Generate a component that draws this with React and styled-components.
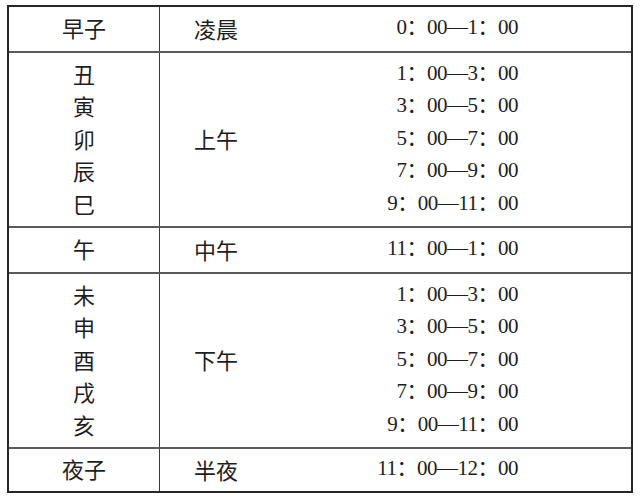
import React from "react";
import styled, { createGlobalStyle } from "styled-components";

const GlobalStyle = createGlobalStyle`
  html, body {
    margin: 0;
    padding: 0;
    background: #ffffff;
  }
`;

const Page = styled.div`
  width: 640px;
  height: 500px;
  padding: 5px 0 0 7px;
  box-sizing: border-box;
  background: #ffffff;
`;

const Frame = styled.div`
  width: 626px;
  border: 2px solid #262626;
  box-sizing: border-box;
  color: #1e1e1e;
`;

const Row = styled.div`
  display: grid;
  grid-template-columns: 151px 1fr;
  height: ${({ $h }) => $h}px;
  border-top: ${({ $first }) => ($first ? "none" : "2px solid #5a5a5a")};
`;

const Branch = styled.div`
  border-right: 1px solid #3a3a3a;
  display: flex;
  flex-direction: column;
  align-items: center;
  justify-content: center;
  padding-bottom: 3px;
  font-family: "Noto Sans CJK SC", sans-serif;
  font-size: 22px;
  line-height: 32.5px;
`;

const Period = styled.div`
  display: flex;
  align-items: center;
  padding: 0 113px 3px 34px;
`;

const Label = styled.span`
  font-family: "Noto Sans CJK SC", sans-serif;
  font-size: 22px;
`;

const Times = styled.div`
  margin-left: auto;
  display: flex;
  flex-direction: column;
  align-items: flex-end;
  font-family: "Liberation Serif", "Noto Sans CJK SC", serif;
  font-size: 21px;
  letter-spacing: -0.5px;
  line-height: 32.5px;
`;

const groups = [
  { h: 44, names: ["早子"], label: "凌晨", times: ["0：00—1：00"] },
  {
    h: 173,
    names: ["丑", "寅", "卯", "辰", "巳"],
    label: "上午",
    times: ["1：00—3：00", "3：00—5：00", "5：00—7：00", "7：00—9：00", "9：00—11：00"],
  },
  { h: 44, names: ["午"], label: "中午", times: ["11：00—1：00"] },
  {
    h: 173,
    names: ["未", "申", "酉", "戌", "亥"],
    label: "下午",
    times: ["1：00—3：00", "3：00—5：00", "5：00—7：00", "7：00—9：00", "9：00—11：00"],
  },
  { h: 42, names: ["夜子"], label: "半夜", times: ["11：00—12：00"] },
];

export default function App() {
  return (
    <>
      <GlobalStyle />
      <Page>
        <Frame>
          {groups.map((g, i) => (
            <Row key={i} $h={g.h} $first={i === 0}>
              <Branch>
                {g.names.map((n) => (
                  <span key={n}>{n}</span>
                ))}
              </Branch>
              <Period>
                <Label>{g.label}</Label>
                <Times>
                  {g.times.map((t, j) => (
                    <span key={j}>{t}</span>
                  ))}
                </Times>
              </Period>
            </Row>
          ))}
        </Frame>
      </Page>
    </>
  );
}
